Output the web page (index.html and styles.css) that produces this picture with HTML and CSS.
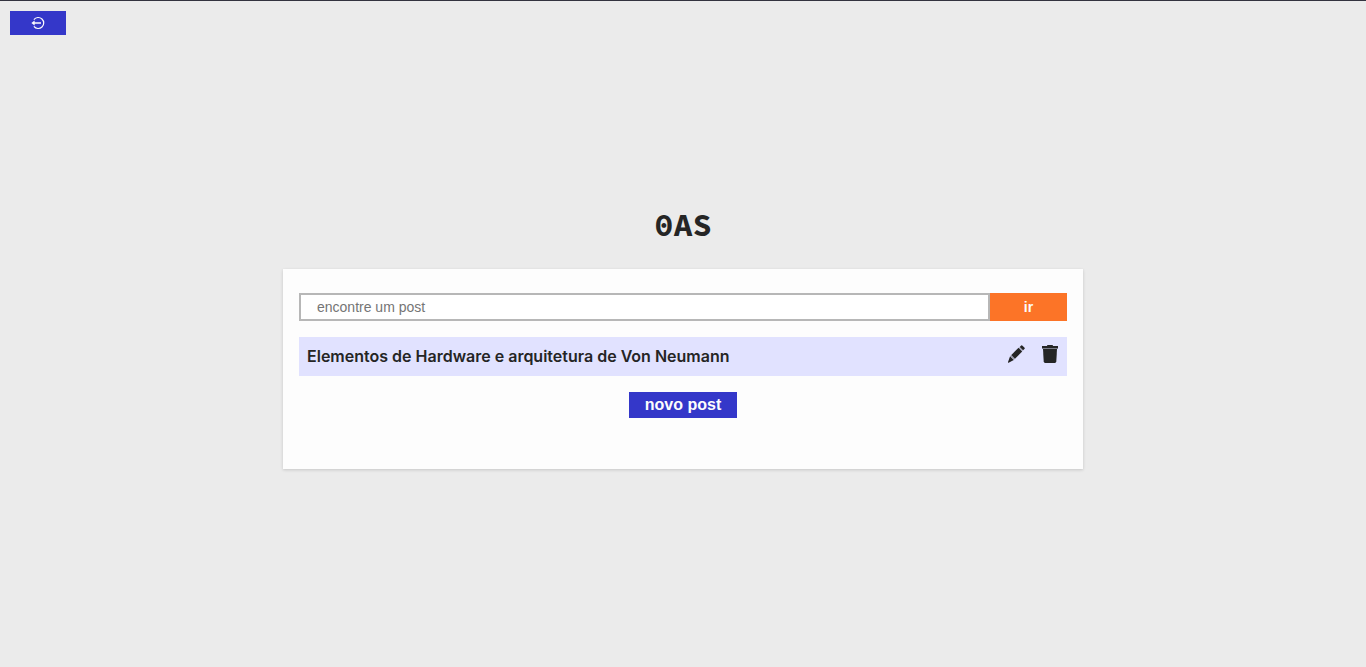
FILE: index.html
```html
<!DOCTYPE html>
<html lang="pt-BR">
<head>
<meta charset="utf-8">
<meta name="viewport" content="width=device-width, initial-scale=1">
<title>0AS</title>
<link rel="stylesheet" href="styles.css">
</head>
<body>
<div class="page">
  <header class="topbar">
    <button class="logout" type="button" aria-label="sair">
      <svg class="logout-icon" viewBox="0 0 14 14" aria-hidden="true">
        <path d="M2.9 3.6A5.5 5.5 0 1 1 2.9 10.4" fill="none" stroke="currentColor" stroke-width="1.2"/>
        <path d="M2.5 7H10" fill="none" stroke="currentColor" stroke-width="1.5"/>
        <path d="M0.4 7L3.6 4.6V9.4Z" fill="currentColor"/>
      </svg>
    </button>
  </header>
  <main class="content">
    <h1 class="title">0AS</h1>
    <section class="card">
      <form class="search">
        <input class="search-input" type="search" placeholder="encontre um post" aria-label="encontre um post">
        <button class="search-button" type="button">ir</button>
      </form>
      <ul class="posts">
        <li class="post">
          <a class="post-title" href="#">Elementos de Hardware e arquitetura de Von Neumann</a>
          <div class="actions">
            <button class="action" type="button" aria-label="editar">
              <svg class="action-icon" viewBox="0 0 18 18" aria-hidden="true" fill="currentColor">
                <path d="M12.7 1.9L14.2 .4Q14.7 0 15.2 .4L17.6 2.8Q18 3.3 17.6 3.8L16.1 5.3Z"/>
                <path d="M12.7 1.9L16.1 5.3L15.1 6.3L11.7 2.9Z" opacity=".25"/>
                <path d="M11.5 2.8L15.2 6.5L8 13.7L4.3 10Z"/>
                <path d="M4.3 10L8 13.7L7 14.7L3.3 11Z" opacity=".4"/>
                <path d="M3.1 11.2L6.8 14.9L1.6 17.7Q.8 18 1 17.1Z"/>
              </svg>
            </button>
            <button class="action" type="button" aria-label="excluir">
              <svg class="action-icon" viewBox="0 0 18 18" aria-hidden="true" fill="currentColor">
                <path d="M1 1H6V.8Q6 0 6.8 0H11.2Q12 0 12 .8V1H17V3H1Z"/>
                <path d="M1 3H17V4H1Z" opacity=".55"/>
                <path d="M2 4H16L15.3 16.6Q15.2 18 13.8 18H4.2Q2.8 18 2.7 16.6Z"/>
              </svg>
            </button>
          </div>
        </li>
      </ul>
      <button class="new-post" type="button">novo post</button>
    </section>
  </main>
</div>
</body>
</html>
```
FILE: styles.css
```css
* {
  box-sizing: border-box;
}

body {
  margin: 0;
  background: #ebebeb;
  color: #252525;
  font-family: Inter, "Liberation Sans", sans-serif;
}

button {
  border: 0;
  padding: 0;
  cursor: pointer;
  font-family: "Liberation Sans", Arial, sans-serif;
  font-weight: 700;
}

.page {
  display: grid;
  grid-template-rows: 1fr auto 1fr;
  min-height: 100vh;
  border-top: 1px solid #33333f;
}

.topbar {
  padding: 10px;
}

.logout {
  display: flex;
  align-items: center;
  justify-content: center;
  padding: 5px 21px;
  background: #3437c9;
  color: #fdfdfd;
}

.logout-icon {
  display: block;
  width: 14px;
  height: 14px;
}

.content {
  width: 100%;
  max-width: 800px;
  margin: 0 auto;
}

.title {
  margin: 0 0 18px;
  font-family: "Source Code Pro", "Liberation Mono", monospace;
  font-size: 32px;
  line-height: 52px;
  text-align: center;
}

.card {
  display: flex;
  flex-direction: column;
  gap: 16px;
  min-height: 200px;
  padding: 24px 16px;
  background: #fdfdfd;
  box-shadow: 0 1px 3px rgba(0, 0, 0, 0.16);
}

.search {
  display: flex;
}

.search-input {
  flex: 1;
  min-width: 0;
  height: 28px;
  margin: 0;
  padding: 0 16px;
  border: 2px solid #b7b7b7;
  border-radius: 0;
  appearance: none;
  background: #fff;
  color: #252525;
  font-family: "Liberation Sans", Arial, sans-serif;
  font-size: 14px;
}

.search-input::placeholder {
  color: #757575;
}

.search-button {
  width: 77px;
  background: #fc7427;
  color: #fdfdfd;
  font-size: 14px;
}

.posts {
  margin: 0;
  padding: 0;
  list-style: none;
}

.post {
  display: flex;
  justify-content: space-between;
  gap: 16px;
  padding: 8px;
  background: #e1e2ff;
}

.post-title {
  color: inherit;
  font-size: 16px;
  font-weight: 600;
  line-height: 23px;
  text-decoration: none;
}

.actions {
  display: flex;
  align-items: flex-start;
  gap: 16px;
}

.action {
  background: none;
  color: #252525;
}

.action-icon {
  display: block;
  width: 18px;
  height: 18px;
}

.new-post {
  align-self: center;
  padding: 4px 16px;
  background: #3437c9;
  color: #fdfdfd;
  font-size: 16px;
  line-height: 18px;
}
```
